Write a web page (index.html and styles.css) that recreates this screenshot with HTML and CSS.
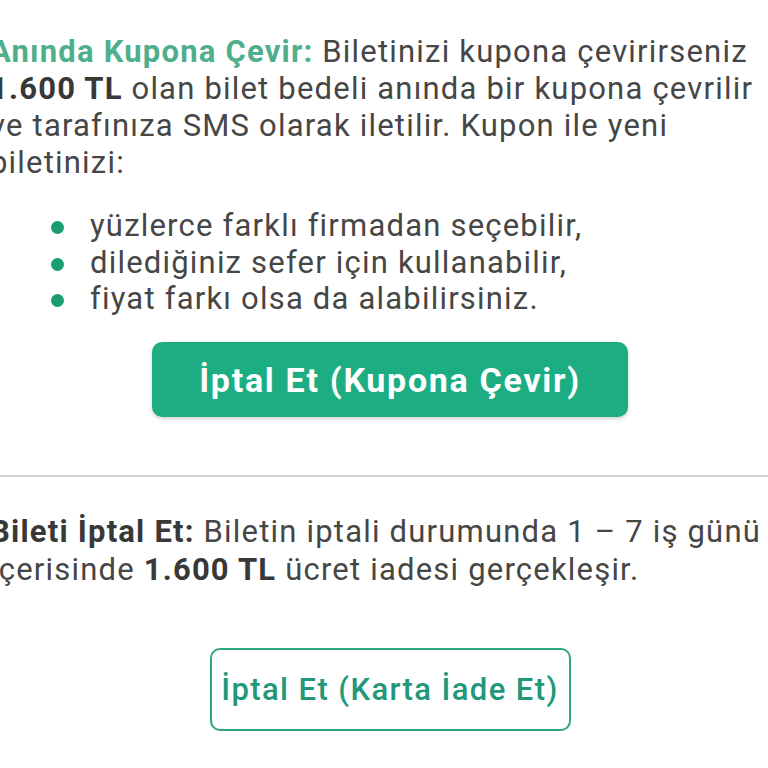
FILE: index.html
```html
<!DOCTYPE html>
<html lang="tr">
<head>
<meta charset="utf-8">
<link rel="stylesheet" href="styles.css">
</head>
<body>
<div class="page">
  <section class="option">
    <p class="desc"><span class="lead">Anında Kupona Çevir:</span> Biletinizi kupona çevirirseniz <b>1.600 TL</b> olan bilet bedeli anında bir kupona çevrilir ve tarafınıza SMS olarak iletilir. Kupon ile yeni biletinizi:</p>
    <ul class="perks">
      <li>yüzlerce farklı firmadan seçebilir,</li>
      <li>dilediğiniz sefer için kullanabilir,</li>
      <li>fiyat farkı olsa da alabilirsiniz.</li>
    </ul>
    <div class="actions"><button class="btn btn-fill">İptal Et (Kupona Çevir)</button></div>
  </section>
  <hr class="divider">
  <section class="option option-second">
    <p class="desc"><b>Bileti İptal Et:</b> Biletin iptali durumunda 1 – 7 iş günü içerisinde <b>1.600 TL</b> ücret iadesi gerçekleşir.</p>
    <div class="actions actions-second"><button class="btn btn-outline">İptal Et (Karta İade Et)</button></div>
  </section>
</div>
</body>
</html>
```
FILE: styles.css
```css
html, body {
  margin: 0;
  padding: 0;
  background: #ffffff;
  overflow: hidden;
}
body {
  font-family: Roboto, "Noto Sans", sans-serif;
  color: #464646;
}
.page {
  width: 800px;
  margin-left: -10px;
}
.option {
  padding-top: 33px;
}
.desc {
  margin: 0;
  padding-right: 15px;
  font-size: 31px;
  line-height: 37px;
  letter-spacing: 1.2px;
}
.desc b {
  font-weight: 700;
  color: #383838;
}
.lead {
  color: #4fae8c;
  font-weight: 700;
}
.perks {
  list-style: none;
  margin: 27px 0 0 0;
  padding: 0 15px 0 100px;
  font-size: 31px;
  line-height: 36.5px;
  letter-spacing: 1.2px;
}
.perks li {
  position: relative;
}
.perks li::before {
  content: "";
  position: absolute;
  left: -39px;
  top: 13px;
  width: 13px;
  height: 13px;
  border-radius: 50%;
  background: #1a9d70;
}
.actions {
  display: flex;
  justify-content: center;
  margin-top: 24.5px;
}
.btn {
  font-family: Roboto, "Noto Sans", sans-serif;
  border-radius: 10px;
  cursor: pointer;
  padding: 0;
}
.btn-fill {
  width: 476px;
  height: 75px;
  background: #1cad82;
  border: none;
  color: #ffffff;
  font-size: 34px;
  font-weight: 700;
  letter-spacing: 1.7px;
  box-shadow: 0 2px 4px rgba(0, 0, 0, 0.18);
}
.divider {
  border: none;
  height: 2px;
  background: #d4d4d4;
  margin: 58px 0 0 10px;
  width: 768px;
}
.option-second {
  padding-top: 35.5px;
}
.option-second .desc {
  line-height: 38px;
}
.actions-second {
  margin-top: 59.5px;
}
.btn-outline {
  width: 361px;
  height: 83px;
  background: #ffffff;
  border: 2px solid #2ea584;
  color: #22977a;
  font-size: 31px;
  font-weight: 500;
  letter-spacing: 1.4px;
}
```
